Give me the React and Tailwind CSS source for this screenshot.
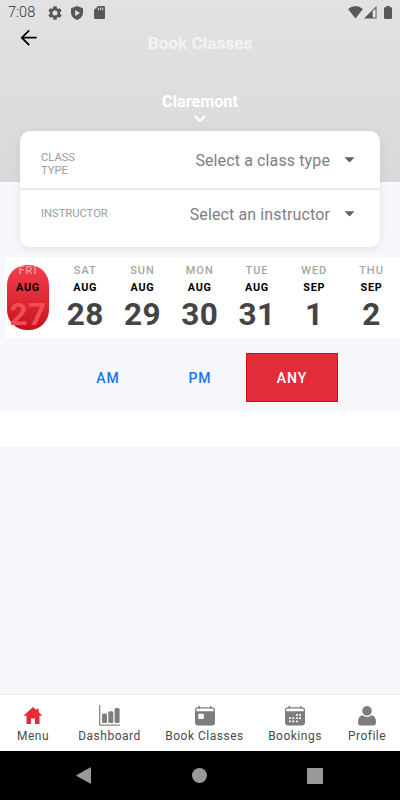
import React from "react";

const days = [
  { day: "FRI", month: "AUG", date: "27", selected: true },
  { day: "SAT", month: "AUG", date: "28" },
  { day: "SUN", month: "AUG", date: "29" },
  { day: "MON", month: "AUG", date: "30" },
  { day: "TUE", month: "AUG", date: "31" },
  { day: "WED", month: "SEP", date: "1" },
  { day: "THU", month: "SEP", date: "2" },
];

function StatusBar() {
  return (
    <div className="flex h-6 items-center pl-2 pr-2 pt-px text-[#585858]">
      <span className="w-[40px] pt-[2px] text-[14.5px] font-light leading-none text-[#333]">7:08</span>
      <svg className="h-[14px] w-[14px]" viewBox="2 2 20 20" fill="currentColor">
        <path d="M19.14 12.94c.04-.3.06-.61.06-.94s-.02-.64-.07-.94l2.03-1.58a.49.49 0 0 0 .12-.61l-1.92-3.32a.488.488 0 0 0-.59-.22l-2.39.96c-.5-.38-1.03-.7-1.62-.94l-.36-2.54a.484.484 0 0 0-.48-.41h-3.84c-.24 0-.43.17-.47.41l-.36 2.54c-.59.24-1.13.57-1.62.94l-2.39-.96a.48.48 0 0 0-.59.22L2.74 8.87c-.12.21-.08.47.12.61l2.03 1.58c-.05.3-.09.63-.09.94s.02.64.07.94l-2.03 1.58a.49.49 0 0 0-.12.61l1.92 3.32c.12.22.37.29.59.22l2.39-.96c.5.38 1.03.7 1.62.94l.36 2.54c.05.24.24.41.48.41h3.84c.24 0 .44-.17.47-.41l.36-2.54c.59-.24 1.13-.56 1.62-.94l2.39.96c.22.08.47 0 .59-.22l1.92-3.32a.49.49 0 0 0-.12-.61l-2.01-1.58zM12 15.6A3.6 3.6 0 1 1 12 8.4a3.6 3.6 0 0 1 0 7.2z" />
      </svg>
      <svg className="ml-[9px] h-[14px] w-[12px]" viewBox="0 0 12 14">
        <path fill="currentColor" d="M6 0 12 2.3V6.5C12 10 9.5 12.9 6 14 2.5 12.9 0 10 0 6.5V2.3Z" />
        <path fill="#e1e1e1" d="M4.2 4v6L9 7Z" />
      </svg>
      <svg className="ml-[11px] h-[13px] w-[11px]" viewBox="0 0 11 13">
        <path fill="currentColor" d="M4 0H9.7Q11 0 11 1.3V11.7Q11 13 9.7 13H1.3Q0 13 0 11.7V4Z" />
        <path stroke="#e1e1e1" strokeWidth="1" d="M4.3 1.6v2.6M6.5 1.6v2.6M8.7 1.6v2.6" />
      </svg>
      <svg className="ml-auto h-[13px] w-[15px]" viewBox="0 0 15 13">
        <path fill="currentColor" d="M0 3Q7.5-2.8 15 3L7.5 12.5Z" />
      </svg>
      <svg className="ml-[1px] h-[13px] w-[13px]" viewBox="0 0 13 13">
        <path fill="currentColor" d="M0 12.5 12.5 0V12.5Z" />
        <path fill="#ededed" d="M8.8 5.2 11.5 2.5V11.5H8.8Z" />
      </svg>
      <svg className="ml-[7px] h-[13px] w-[8px]" viewBox="0 0 8 13">
        <path fill="currentColor" d="M2.3 0H5.7V1.2H7Q8 1.2 8 2.2V12Q8 13 7 13H1Q0 13 0 12V2.2Q0 1.2 1 1.2H2.3Z" />
      </svg>
    </div>
  );
}

function Header() {
  return (
    <header className="h-[182px] bg-linear-to-b from-[#e2e2e2] to-[#d9d9d9]">
      <StatusBar />
      <div className="flex h-[38px] items-start pl-5 pr-5">
        <svg className="mt-[5px] h-[18px] w-[18px]" viewBox="0 0 18 18" fill="none" stroke="#000" strokeWidth="1.8">
          <path d="M16.6 8.7H2M9.2 1.3 1.8 8.7l7.4 7.4" />
        </svg>
        <h1 className="mt-[7px] flex-1 pr-[18px] text-center text-[17.2px] font-bold leading-6 text-[#f3f3f6]">Book Classes</h1>
      </div>
      <div className="flex flex-col items-center pt-[29px] text-white">
        <div className="text-[16.2px] font-bold leading-[22px]">Claremont</div>
        <svg className="mt-[2px] h-[8px] w-[12px]" viewBox="0 0 12 8" fill="none" stroke="currentColor" strokeWidth="2.2">
          <path d="m.8.8 5.2 5.2 5.2-5.2" />
        </svg>
      </div>
    </header>
  );
}

function SelectRow({ label, value, className, labelClass }) {
  return (
    <div className={"flex pl-[21px] pr-[25px] " + className}>
      <div className={"w-[80px] whitespace-pre-line text-[11.2px] leading-[13px] text-[#9b9b9b] " + labelClass}>{label}</div>
      <div className="flex-1 whitespace-nowrap text-right text-[16px] leading-5 tracking-[0.12px] text-[#808080]">{value}</div>
      <svg className="ml-[14px] mt-[6px] h-[6px] w-[11px]" viewBox="0 0 11 6">
        <path fill="#606060" d="M.5.3h10L5.5 5.6Z" />
      </svg>
    </div>
  );
}

function DayCell({ day, month, date, selected }) {
  return (
    <div
      className={
        "flex h-[65px] w-[42px] shrink-0 flex-col items-center whitespace-nowrap rounded-[20px] " +
        (selected ? "bg-linear-to-b from-[#f43f4c] to-[#c70f1c]" : "")
      }
    >
      <div className={"mt-[-1px] text-[11px] font-medium leading-[13px] tracking-[1px] " + (selected ? "text-[#f49aa0]" : "text-[#a5a5a5]")}>
        {day}
      </div>
      <div className="mt-[4px] text-[10.8px] font-bold leading-[13px] tracking-[0.8px] text-black">{month}</div>
      <div className={"mt-[2px] text-[31.5px] font-bold leading-[38px] tracking-[0.4px] " + (selected ? "text-[#f04e54]" : "text-[#444]")}>
        {date}
      </div>
    </div>
  );
}

function CalendarIcon({ children }) {
  return (
    <svg className="h-[20px] w-[20px]" viewBox="0 0 20 20">
      <path fill="none" stroke="#7d7d7d" strokeWidth="1.2" d="M.6 7V4Q.6 1.8 3 1.8H17Q19.4 1.8 19.4 4V7" />
      <path fill="#7d7d7d" d="M0 5.3H20V16.5Q20 19.5 17 19.5H3Q0 19.5 0 16.5ZM3.5 0H5V2.4H3.5ZM15 0h1.5V2.4H15Z" />
      {children}
    </svg>
  );
}

function Tab({ label, width, children }) {
  return (
    <div className={"flex flex-col items-center pt-[10px] " + width}>
      <div className="flex h-[21px] items-end">{children}</div>
      <div className="mt-[2px] whitespace-nowrap text-[12px] leading-4 tracking-[0.5px] text-[#4a4a4a]">{label}</div>
    </div>
  );
}

function TabBar() {
  return (
    <nav className="flex h-[57px] border-t border-[#ebebed] bg-white">
      <Tab label="Menu" width="w-[66px]">
        <svg className="mb-[2px] h-[17px] w-[18px]" viewBox="0 0 18 17">
          <path fill="#e52b38" d="M9 0 12.5 3.2V1.8h2.2v3.4L18 8.3v.5h-2.5V17H11v-5.5H7V17H2.5V8.8H0v-.5Z" />
        </svg>
      </Tab>
      <Tab label="Dashboard" width="w-[87px]">
        <svg className="h-[21px] w-[21px]" viewBox="0 0 21 21">
          <path fill="none" stroke="#8a8a8a" strokeWidth="1.3" d="M.7 0V20.2H21" />
          <g fill="#7d7d7d">
            <rect x="3" y="8.5" width="5" height="9.5" rx="1.5" />
            <rect x="9.3" y="6.3" width="5" height="11.7" rx="1.5" />
            <rect x="15.6" y="3" width="5" height="15" rx="1.5" />
          </g>
        </svg>
      </Tab>
      <Tab label="Book Classes" width="w-[103px]">
        <CalendarIcon>
          <rect x="3.3" y="7.8" width="5.6" height="5.2" rx="1" fill="#fff" />
        </CalendarIcon>
      </Tab>
      <Tab label="Bookings" width="w-[78px]">
        <CalendarIcon>
          <g fill="#fff">
            {[[11, 8], [14, 8], [4, 11.3], [7.3, 11.3], [11, 11.3], [14, 11.3], [4, 14.5], [7.3, 14.5], [11, 14.5]].map(([x, y]) => (
              <rect key={x + "-" + y} x={x} y={y} width="2" height="1.8" rx=".5" />
            ))}
          </g>
        </CalendarIcon>
      </Tab>
      <Tab label="Profile" width="w-[66px]">
        <svg className="h-[20px] w-[18px]" viewBox="0 0 18 20" fill="#7d7d7d">
          <circle cx="9" cy="4.9" r="4.8" />
          <path d="M4.3 9.2Q9 12.8 13.7 9.2Q18 10 18 16.5Q18 19.5 15 19.5H3Q0 19.5 0 16.5Q0 10 4.3 9.2Z" />
        </svg>
      </Tab>
    </nav>
  );
}

export default function App() {
  return (
    <div className="flex h-[800px] w-[400px] flex-col overflow-hidden bg-[#f6f8fb] font-['Roboto',sans-serif]">
      <Header />
      <section className="relative mx-5 -mt-[51px] h-[116px] shrink-0 rounded-[10px] bg-white shadow-[0_2px_10px_rgba(0,0,0,0.09)]">
        <SelectRow className="h-[59px] border-b-2 border-[#e9e9ea] pt-[20px]" labelClass="pt-0" label={"CLASS\nTYPE"} value="Select a class type" />
        <SelectRow className="pt-[15px]" labelClass="pt-[2px]" label="INSTRUCTOR" value="Select an instructor" />
      </section>
      <section className="ml-[5px] mt-[10px] flex h-[81px] shrink-0 gap-[15.25px] overflow-hidden bg-white pl-[2px] pt-[8px]">
        {days.map((d) => (
          <DayCell key={d.day} {...d} />
        ))}
      </section>
      <section className="flex h-[74px] shrink-0 items-start justify-center pt-[15px] text-[14px] font-medium tracking-[1px] text-[#1a73f5]">
        <div className="flex h-[49px] w-[92px] items-center justify-center pt-px">AM</div>
        <div className="flex h-[49px] w-[92px] items-center justify-center pt-px">PM</div>
        <div className="flex h-[49px] w-[92px] items-center justify-center border border-[#e30613] bg-[#e22c39] pt-px text-white">ANY</div>
      </section>
      <div className="h-[35px] shrink-0 bg-white" />
      <div className="flex-1" />
      <TabBar />
      <footer className="flex h-[49px] shrink-0 items-center bg-black pl-[76px]">
        <svg className="h-[17px] w-[15px]" viewBox="0 0 15 17">
          <path fill="#999" stroke="#999" strokeLinejoin="round" d="M14.5.8v15.4L.6 8.5Z" />
        </svg>
        <div className="ml-[101px] h-[15px] w-[15px] rounded-full bg-[#999]" />
        <div className="ml-[100px] h-[16px] w-[16px] rounded-[1px] bg-[#999]" />
      </footer>
    </div>
  );
}
